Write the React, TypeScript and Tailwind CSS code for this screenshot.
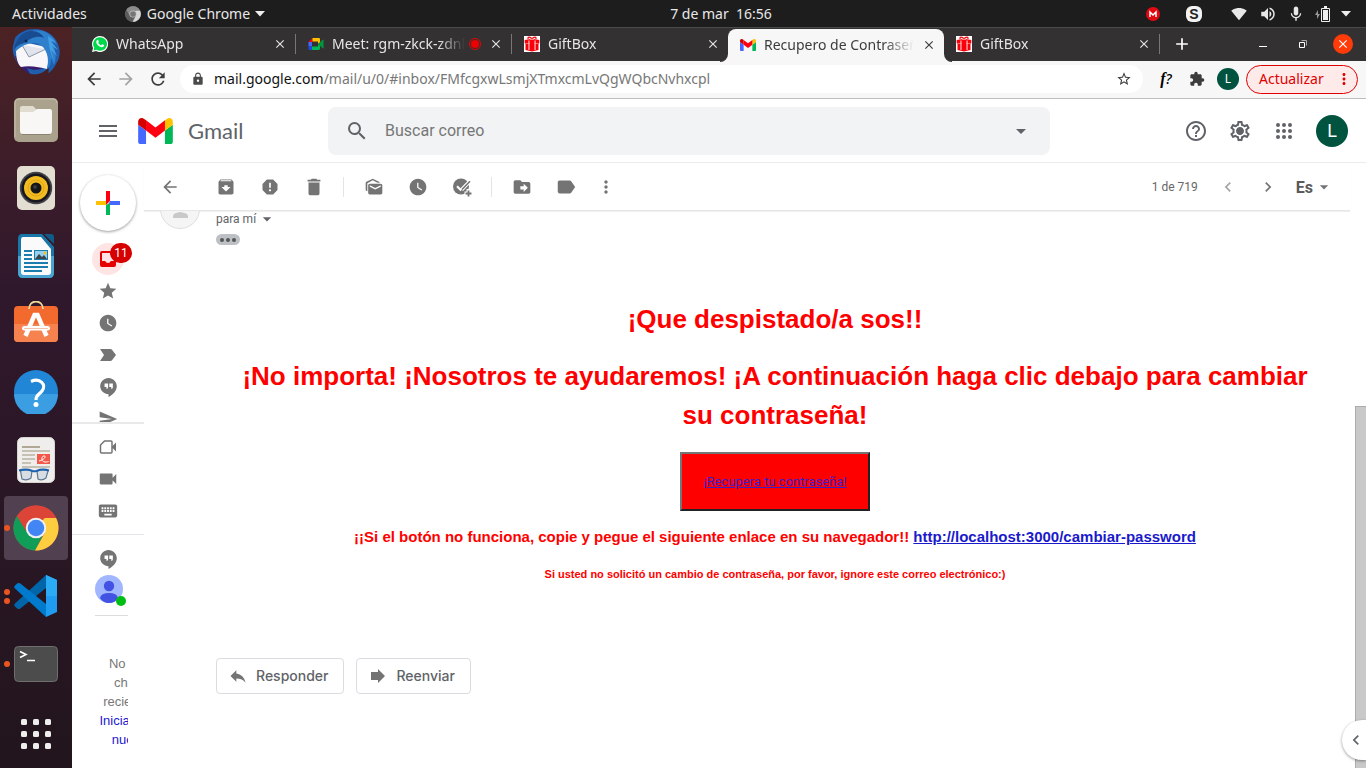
import type { ReactNode } from "react";
import {
  MdAdd,
  MdArchive,
  MdArrowBack,
  MdArrowDropDown,
  MdArrowForward,
  MdChevronLeft,
  MdChevronRight,
  MdClose,
  MdDelete,
  MdDriveFileMove,
  MdExtension,
  MdHelpOutline,
  MdKeyboard,
  MdLabel,
  MdLabelImportant,
  MdLock,
  MdMarkAsUnread,
  MdMenu,
  MdMic,
  MdMoreVert,
  MdRefresh,
  MdReply,
  MdReport,
  MdSearch,
  MdSend,
  MdSettings,
  MdSignalWifi4Bar,
  MdStar,
  MdStarBorder,
  MdVideocam,
  MdVolumeUp,
  MdWatchLater,
  MdOutlineSettings,
} from "react-icons/md";

/* ---------- drawings ---------- */

function GmailLogo({ className }: { className: string }) {
  return (
    <svg viewBox="52 42 88 66" className={className} aria-hidden="true">
      <path fill="#4568ff" d="M58 108h14V74L52 59v43c0 3.32 2.69 6 6 6" />
      <path fill="#00b857" d="M120 108h14c3.32 0 6-2.69 6-6V59l-20 15" />
      <path fill="#ffc200" d="M120 48v26l20-15v-8c0-7.42-8.47-11.65-14.4-7.2" />
      <path fill="#ff0012" d="M72 74V48l24 18 24-18v26L96 92" />
      <path fill="#d40000" d="M52 51v8l20 15V48l-5.6-4.2c-5.94-4.45-14.4-.22-14.4 7.2" />
    </svg>
  );
}

function WhatsAppIcon() {
  return (
    <svg viewBox="0 0 16 16" className="size-4 shrink-0" aria-hidden="true">
      <path fill="#fff" d="M8 0a8 8 0 0 0-7 11.9L0 16l4.2-1A8 8 0 1 0 8 0z" />
      <path fill="#00d94c" d="M8 1.2a6.8 6.8 0 0 0-5.8 10.4L1.6 14.4l2.9-.7A6.8 6.8 0 1 0 8 1.2z" />
      <path
        fill="#fff"
        d="M5.200 4.100c.4-.4.9-.3 1 .1l.6 1.300c.1.300 0 .5-.6 1.200.7 1.300 1.600 2.100 2.900 2.700l.8-1c.2-.2.4-.2.6-.1l1.400.7c.3.200.3.400.2.800-.3 1.100-1.600 1.700-2.700 1.400-2.600-.7-4.400-2.500-5-4.300-.3-1 .1-2.200.8-2.800z"
      />
    </svg>
  );
}

function MeetIcon() {
  return (
    <svg viewBox="0 0 16 14" className="h-3.5 w-4 shrink-0" aria-hidden="true">
      <path fill="#ff0012" d="M4.500 1 .5 5h4z" />
      <path fill="#4568ff" d="M.5 5H4v4.500H.5z" />
      <path fill="#2148e0" d="M.5 9.500H4V13H1.700C1 13 .5 12.500.5 11.800z" />
      <path fill="#00b857" d="M4 9.500h6V7l2 1.500v3.300c0 .7-.5 1.200-1.200 1.200H4z" />
      <path fill="#ffc200" d="M4.500 1h6.300c.7 0 1.200.5 1.200 1.200v3L10 7V4.500H4.500z" />
      <path fill="#00953d" d="M10 7l4.800-4.300c.3-.3.800-.1.800.4v7.800c0 .5-.5.7-.8.4z" />
    </svg>
  );
}

function GiftIcon() {
  return (
    <svg viewBox="0 0 16 16" className="size-4 shrink-0" aria-hidden="true">
      <path fill="#fff" d="M0 0h16v16H0z" />
      <path fill="#f9000b" d="M.7 4 8 2.700 15.300 4v3.300h-.8v6.700L8 15.600 1.500 14V7.300H.7z" />
      <path fill="none" stroke="#f9000b" strokeWidth="1.300" d="M8 3C6 .2 3.200.6 4.200 3M8 3c2-2.800 4.800-2.400 3.800 0" />
      <path fill="#ffb3b3" d="M4.300 4.400h1.300v9.500H4.300zM10.400 4.400h1.300v9.500h-1.300zM6 2.700h4v1H6z" />
      <path fill="#ffd0d0" d="M2 7h3.500v.6H2zM10.500 7H14v.6h-3.500z" />
    </svg>
  );
}

function ChromeIcon({ className, mono = false }: { className: string; mono?: boolean }) {
  const red = mono ? "#8b8b8b" : "#db4437";
  const green = mono ? "#5c5c5c" : "#0f9d58";
  const yellow = mono ? "#d6d6d6" : "#ffcd40";
  return (
    <svg viewBox="0 0 48 48" className={className} aria-hidden="true">
      <circle cx="24" cy="24" r="23.500" fill={red} />
      <path fill={green} d="M4.100 11.500A23.500 23.500 0 0 0 23 47.500L32.700 29 24 24l-8.700 5z" />
      <path fill={yellow} d="M24 13.500h21A23.500 23.500 0 0 1 23 47.500L33.100 29.200z" />
      <path fill={red} d="M4.100 11.500 14.900 29.200 24 24l9 -10.500h12A23.500 23.500 0 0 0 4.100 11.500z" />
      <circle cx="24" cy="24" r="10.700" fill={mono ? "#c4c4c4" : "#f1f1f1"} />
      <circle cx="24" cy="24" r="8.600" fill={mono ? "#777" : "#4285f4"} />
    </svg>
  );
}

function HangoutsIcon() {
  return (
    <svg viewBox="0 0 24 24" className="size-[19px]" fill="currentColor" aria-hidden="true">
      <path d="M12 0C6.200 0 1.500 4.700 1.500 10.500c0 5.500 5 10 10.500 10V24c6.350-3.100 10.500-8.200 10.500-13.500C22.500 4.700 17.800 0 12 0zm-.5 11.500c0 1.400-.9 2.500-2 2.500v-2.500H7V7h4.500zm6 0c0 1.400-.9 2.500-2 2.500v-2.500H13V7h4.500z" />
    </svg>
  );
}

function AddTaskIcon() {
  return (
    <svg viewBox="0 0 20 20" className="size-5" aria-hidden="true">
      <circle cx="9" cy="9.500" r="8" fill="currentColor" />
      <path d="m5 9.300 3.500 3.500L18 3" fill="none" stroke="#fff" strokeWidth="2" />
      <path d="m10.500 13.500 8-8.500" stroke="#fff" strokeWidth="1.500" />
      <path d="m10 12.600 8-8.300" stroke="currentColor" strokeWidth="1.500" />
      <path d="M16.500 12v8M12.500 16.500H20" stroke="#fff" strokeWidth="4" />
      <path d="M16.500 13.500v6M13.500 16.500h6" stroke="currentColor" strokeWidth="1.800" />
    </svg>
  );
}

function NewMeetingIcon() {
  return (
    <svg viewBox="0 0 18 16" className="h-4 w-[18px]" aria-hidden="true">
      <path d="M5.500 2H12c.6 0 1 .4 1 1v10c0 .6-.4 1-1 1H2.500c-.6 0-1-.4-1-1V6z" fill="none" stroke="currentColor" strokeWidth="1.500" />
      <path d="M13 7.500 17 3.500v9l-4-4z" fill="currentColor" />
    </svg>
  );
}

function InboxIcon() {
  return (
    <svg viewBox="0 0 18 18" className="size-[18px]" aria-hidden="true">
      <path fill="#e60000" fillRule="evenodd" d="M3 1h12a2 2 0 0 1 2 2v12a2 2 0 0 1-2 2H3a2 2 0 0 1-2-2V3a2 2 0 0 1 2-2zm0 2v8h3.200a3 3 0 0 0 5.600 0H15V3z" />
    </svg>
  );
}

function ThunderbirdIcon() {
  return (
    <svg viewBox="0 0 48 48" className="size-12" aria-hidden="true">
      <path fill="#1f5fae" d="M3 10C9 1 24-2 35 4c13 7 16 22 9 32-2 4-5 8-8 9 1-3 1-4 0-5-5 6-12 7-17 6C8 42-1 28 1 18z" />
      <path fill="#3a1d6c" d="M3 28c2 9 8 15 15 18l-3-6c7 3 15 2 20-2l-4-6z" />
      <path fill="#f8f8fb" d="M4 21c0 8 1 14 5 18 8-2 19 0 26 2 2-7 2-15-1-22l-18-4z" />
      <path fill="#e1e4ec" d="m10 17 23 4-16 8z" />
      <path fill="none" stroke="#8d97a8" strokeWidth="1" d="m10 17 7 12 17-8" />
      <path fill="#2e7fcc" d="M20 3c11-3 22 4 25 14l-6-4c5 8 6 16 3 24l-3-7c0 6-1 9-4 11 2-9 1-16-4-22-4-4-9-5-15-3-5 1-9 4-13 8 1-10 8-19 17-21z" />
      <path fill="#194b91" d="M14 4c8-3 16 1 18 6-6-3-14 0-20 5-4 1-7 3-10 6C4 12 8 7 14 4z" />
      <path fill="#45a0e6" d="m36 8 8 6-5-1 7 9-6-4 5 10-6-6 3 10c-3-4-5-13-6-24z" />
      <circle cx="14" cy="13" r="1.500" fill="#0d2850" />
    </svg>
  );
}

function FilesIcon() {
  return (
    <svg viewBox="0 0 44 44" className="size-11" aria-hidden="true">
      <rect width="44" height="44" rx="5" fill="#aaa28c" />
      <path d="M1 39V5q0-4 4-4h34q4 0 4 4" fill="none" stroke="#c4bda9" />
      <path d="M6 10q0-2 2-2h11l3 3-1 6H6z" fill="#e0dccf" />
      <path d="M6 14h13l4-3h13q2 0 2 3v19q0 3-3 3H9q-3 0-3-3z" fill="#f8f7f5" />
      <path d="M8 36.500h28" stroke="#8a836f" strokeWidth="1" />
    </svg>
  );
}

function RhythmboxIcon() {
  return (
    <svg viewBox="0 0 38 44" className="h-11 w-[38px]" aria-hidden="true">
      <rect width="38" height="44" rx="5" fill="#e2ded2" />
      <circle cx="19" cy="22" r="16.200" fill="#44434a" />
      <circle cx="19" cy="22" r="14.500" fill="#17181d" />
      <circle cx="19" cy="22" r="12" fill="#f1bb21" />
      <circle cx="19" cy="22" r="8" fill="none" stroke="#e0a711" />
      <circle cx="19" cy="22" r="5.500" fill="#15161a" />
      <circle cx="18" cy="21" r="2" fill="#393a40" />
    </svg>
  );
}

function WriterIcon() {
  return (
    <svg viewBox="0 0 38 46" className="h-[46px] w-[38px]" aria-hidden="true">
      <path d="M5 1h20l12 13v26q0 5-5 5H6q-5 0-5-5V6q0-5 4-5z" fill="#1877a8" />
      <path d="M1 23h36v17q0 5-5 5H6q-5 0-5-5z" fill="#49a4cf" />
      <path d="M6 4h18l10 12v23q0 3-3 3H7q-3 0-3-3V7q0-3 2-3z" fill="#fafafa" />
      <path d="M27 1h7q3 0 3 3v7z" fill="#0e5c87" />
      <path d="M7 18h8M7 22h8M7 26h8M7 30h24M7 34h24M7 38h18" stroke="#1b7cae" strokeWidth="2" />
      <path d="M17 17h14v10H17z" fill="#1b7cae" />
      <path d="M18 18h12v8H18z" fill="#97d0ee" />
      <path d="m18 26 4-5 3 3 2-2 3 4z" fill="#3b4449" />
      <circle cx="28" cy="20" r="1.500" fill="#f6c31c" />
    </svg>
  );
}

function SoftwareIcon() {
  return (
    <svg viewBox="0 3 46 46" className="size-[46px]" aria-hidden="true">
      <rect x="1" y="8" width="44" height="36" rx="4" fill="#f26a2e" />
      <path d="M1 26h44v14q0 4-4 4H5q-4 0-4-4z" fill="#f5824f" />
      <path d="M16 11c0-10 14-10 14 0" fill="none" stroke="#f0d49a" strokeWidth="1.800" />
      <path d="M12.500 38 21.500 17h3l9 21" fill="none" stroke="#fff" strokeWidth="4.500" />
      <rect x="9" y="28" width="28" height="4.500" rx="2.200" fill="#fff" />
      <path d="M11 30.500h24" stroke="#f3c3ad" strokeWidth="1" />
    </svg>
  );
}

function HelpIcon() {
  return (
    <svg viewBox="0 0 44 44" className="size-11" aria-hidden="true">
      <circle cx="22" cy="22" r="22" fill="#2186d6" />
      <path d="M0 24h44a22 22 0 0 1-44 0z" fill="#3c9ee2" />
      <path d="M17 11.500c9-4 16 3 11 9.500-3 4-6 4-6 9" fill="none" stroke="#fff" strokeWidth="3.200" />
      <circle cx="22" cy="34.500" r="2.500" fill="#fff" />
    </svg>
  );
}

function EvinceIcon() {
  return (
    <svg viewBox="0 0 38 46" className="h-[46px] w-[38px]" aria-hidden="true">
      <rect x=".5" y=".5" width="37" height="45" rx="5" fill="#efeeec" stroke="#d8d5d0" />
      <path d="M5 10h18" stroke="#b1a795" strokeWidth="2" />
      <path d="M5 14h28M5 18h13M5 22h13M5 26h9M5 30h28" stroke="#c7c1b4" strokeWidth="2" />
      <path d="M20 17h13v10H20z" fill="#f4564a" />
      <path d="M22 24c5-1 8-5 5-5s-3 6 1 6 4-1 4-1" fill="none" stroke="#fff" strokeWidth="1" />
      <path d="M3.500 34q6-2 11.500 0l-1 7q-4 3-9 1zM20 34q6-2 11 0l-2 7q-4 3-8 1z" fill="#d7dde3" stroke="#5e7897" strokeWidth="1.200" />
      <path d="M2 33.500q7-2 13.500.5 2 .5 4 0 6-2.500 12.500-.5" fill="none" stroke="#1c61b0" strokeWidth="2" />
    </svg>
  );
}

function VsCodeIcon() {
  return (
    <svg viewBox="0 0 44 44" className="size-11" aria-hidden="true">
      <path d="M1 29.500q-1.500 1.500 0 3l2.500 2.200q1.200.8 2.500 0L32 14V1z" fill="#0065a9" />
      <path d="M1 14.500q-1.500-1.500 0-3L3.500 9.300q1.200-.8 2.500 0L32 30v13z" fill="#007acc" />
      <path d="M32 1 43 6v32l-11 5z" fill="#1f9cf0" />
      <path d="M32 1 43 6v16H32z" fill="#2aabf3" />
    </svg>
  );
}

function TerminalIcon() {
  return (
    <svg viewBox="0 0 44 36" className="h-9 w-11" aria-hidden="true">
      <rect x=".5" y=".5" width="43" height="35" rx="4" fill="#4c4c4c" stroke="#6e6e6e" />
      <path d="m6 5.500 6 3-6 3M13 14.500h8" fill="none" stroke="#fff" strokeWidth="1.600" />
    </svg>
  );
}

function GridIcon() {
  return (
    <svg viewBox="0 0 30 30" className="size-[30px]" fill="#eeeeec" aria-hidden="true">
      {[0, 12, 24].map((y) =>
        [0, 12, 24].map((x) => <rect key={`${x}-${y}`} x={x} y={y} width="6" height="6" rx="1.500" />),
      )}
    </svg>
  );
}

function AppsIcon() {
  return (
    <svg viewBox="0 0 24 24" className="size-6" fill="currentColor" aria-hidden="true">
      {[6, 12, 18].map((y) => [6, 12, 18].map((x) => <circle key={`${x}-${y}`} cx={x} cy={y} r="2" />))}
    </svg>
  );
}

function GearIcon() {
  return (
    <span className="relative block size-6">
      <MdOutlineSettings className="size-6" />
      <span className="absolute inset-[9px] rounded-full bg-current" />
    </span>
  );
}

/* ---------- desktop ---------- */

function TopBar() {
  return (
    <header className="grid h-[27px] shrink-0 grid-cols-3 items-center bg-[#1d1d1d] text-sm leading-none text-[#e8e8e8]">
      <div className="flex items-center pl-3">
        <button type="button">Actividades</button>
        <button type="button" className="ml-[38px] flex items-center">
          <ChromeIcon className="mr-1.5 size-4" mono />
          Google Chrome
          <svg viewBox="0 0 10 6" className="ml-[5px] h-1.5 w-2.5" aria-hidden="true">
            <path d="M0 0h10L5 5.500z" fill="#eee" />
          </svg>
        </button>
      </div>
      <time className="justify-self-center pl-[76px]">7 de mar&nbsp; 16:56</time>
      <div className="flex items-center justify-end pr-[15px]">
        <svg viewBox="0 0 14 14" className="mr-[26px] size-3.5" aria-hidden="true">
          <circle cx="7" cy="7" r="7" fill="#e10a12" />
          <path d="M4 10V5l3 3 3-3v5" fill="none" stroke="#fff" strokeWidth="1.500" />
        </svg>
        <span className="mr-[29px] flex size-4 items-center justify-center rounded-[6px] bg-[#f2f2f2] font-['Liberation_Sans',sans-serif] text-sm font-bold leading-none text-[#222]">
          S
        </span>
        <MdSignalWifi4Bar className="mr-3 size-4" />
        <MdVolumeUp className="mr-2.5 size-[18px]" />
        <MdMic className="mr-2.5 size-[18px]" />
        <svg viewBox="0 0 15 16" className="mr-[11px] h-4 w-[15px]" aria-hidden="true">
          <path d="M3 4 0 9h2v4l3-5H3z" fill="#999" />
          <path d="M6.500 2.500h8v13h-8z" fill="none" stroke="#eee" />
          <path d="M8 4h5v10H8zM9 0h3v2H9z" fill="#eee" />
        </svg>
        <svg viewBox="0 0 10 6" className="h-1.5 w-2.5" aria-hidden="true">
          <path d="M0 0h10L5 5.500z" fill="#eee" />
        </svg>
      </div>
    </header>
  );
}

const dockItems: { name: string; icon: ReactNode; windows: number; active?: boolean }[] = [
  { name: "Thunderbird", icon: <ThunderbirdIcon />, windows: 0 },
  { name: "Archivos", icon: <FilesIcon />, windows: 0 },
  { name: "Rhythmbox", icon: <RhythmboxIcon />, windows: 0 },
  { name: "LibreOffice Writer", icon: <WriterIcon />, windows: 0 },
  { name: "Software", icon: <SoftwareIcon />, windows: 0 },
  { name: "Ayuda", icon: <HelpIcon />, windows: 0 },
  { name: "Visor de documentos", icon: <EvinceIcon />, windows: 0 },
  { name: "Google Chrome", icon: <ChromeIcon className="size-[46px]" />, windows: 1, active: true },
  { name: "Visual Studio Code", icon: <VsCodeIcon />, windows: 2 },
  { name: "Terminal", icon: <TerminalIcon />, windows: 1 },
];

function Dock() {
  return (
    <nav
      aria-label="Dock"
      className="flex w-[72px] shrink-0 flex-col overflow-hidden bg-linear-to-b from-[#4c2224] via-[#30182c] via-35% to-[#22151d] px-1"
    >
      <ul className="-mt-[7px] flex shrink-0 flex-col gap-1">
        {dockItems.map((item) => (
          <li key={item.name} className="relative">
            <button
              type="button"
              aria-label={item.name}
              className={`flex h-16 w-full items-center justify-center rounded ${item.active ? "bg-[#51404f]" : ""}`}
            >
              {item.icon}
            </button>
            <span className="absolute inset-y-0 left-0 flex flex-col justify-center gap-[3px]">
              {Array.from({ length: item.windows }, (_, i) => (
                <span key={i} className="size-1.5 rounded-full bg-[#e95420]" />
              ))}
            </span>
          </li>
        ))}
      </ul>
      <button type="button" aria-label="Mostrar aplicaciones" className="mt-auto flex h-[68px] shrink-0 items-center justify-center">
        <GridIcon />
      </button>
    </nav>
  );
}

/* ---------- browser ---------- */

function Tab({ icon, title, active = false, divider = false, recording = false }: { icon: ReactNode; title: string; active?: boolean; divider?: boolean; recording?: boolean }) {
  return (
    <div
      className={`relative flex h-full w-[216px] min-w-0 items-center pl-3 ${active ? "rounded-t-lg bg-[#f7f7f7] text-[#3c3c3c]" : "text-[#e6e6e6]"}`}
    >
      {active && (
        <>
          <span className="absolute -left-2 bottom-0 size-2 bg-[#f7f7f7]">
            <span className="block size-2 rounded-br-lg bg-[#333132]" />
          </span>
          <span className="absolute -right-2 bottom-0 size-2 bg-[#f7f7f7]">
            <span className="block size-2 rounded-bl-lg bg-[#333132]" />
          </span>
        </>
      )}
      {icon}
      <span className="ml-2 min-w-0 flex-1 overflow-hidden whitespace-nowrap pb-px text-sm leading-5 mask-r-from-80%">
        {title}
      </span>
      {recording && (
        <span className="ml-1 flex size-3 shrink-0 items-center justify-center rounded-full border border-[#e00]">
          <span className="size-2 rounded-full bg-[#e00]" />
        </span>
      )}
      <button type="button" aria-label={`Cerrar ${title}`} className="mx-2 shrink-0">
        <MdClose className="size-3.5" />
      </button>
      {divider && <span className="h-5 w-px shrink-0 bg-[#777]" />}
    </div>
  );
}

function TabStrip() {
  return (
    <div className="flex h-[34px] shrink-0 items-center border-t border-[#4a4a4a] bg-[#333132] pb-px pl-2">
      <Tab icon={<WhatsAppIcon />} title="WhatsApp" divider />
      <Tab icon={<MeetIcon />} title="Meet: rgm-zkck-zdnk" divider recording />
      <Tab icon={<GiftIcon />} title="GiftBox" />
      <div className="-mb-px h-[34px] w-[216px] min-w-0 pt-px">
        <Tab icon={<GmailLogo className="h-3 w-4 shrink-0" />} title="Recupero de Contraseña" active />
      </div>
      <Tab icon={<GiftIcon />} title="GiftBox" divider />
      <button type="button" aria-label="Nueva pestaña" className="ml-3 text-white">
        <MdAdd className="size-5" />
      </button>
      <div className="ml-auto flex items-center pr-[13px] text-white">
        <button type="button" aria-label="Minimizar" className="mr-8 flex h-4 w-2 items-center pt-1">
          <span className="h-px w-full bg-white" />
        </button>
        <button type="button" aria-label="Restaurar" className="mr-[26px]">
          <svg viewBox="0 0 8 8" className="size-2" fill="none" aria-hidden="true">
            <path d="M.5 2.500h5v5h-5z" stroke="#fff" />
            <path d="M2.500.5h5v5" stroke="#aaa" />
          </svg>
        </button>
        <button type="button" aria-label="Cerrar" className="flex size-5 items-center justify-center rounded-full bg-[#ff3b09]">
          <MdClose className="size-3.5" />
        </button>
      </div>
    </div>
  );
}

function AddressBar() {
  return (
    <div className="flex h-[38px] shrink-0 items-center border-b border-[#bdbdbd] bg-[#f7f7f7] pb-px pl-3 pr-2 text-[#3c3c3c]">
      <div className="mr-3 flex gap-3">
        <button type="button" aria-label="Atrás"><MdArrowBack className="size-5" /></button>
        <button type="button" aria-label="Adelante" className="text-[#a3a3a3]"><MdArrowForward className="size-5" /></button>
        <button type="button" aria-label="Recargar"><MdRefresh className="size-5" /></button>
      </div>
      <div className="flex h-7 min-w-0 flex-1 items-center rounded-full bg-white pl-[11px] pr-[11px]">
        <MdLock className="size-3.5 shrink-0 text-[#4a4a4a]" />
        <span className="ml-[9px] min-w-0 flex-1 truncate text-sm leading-5 text-[#777]">
          <span className="text-[#111]">mail.google.com</span>/mail/u/0/#inbox/FMfcgxwLsmjXTmxcmLvQgWQbcNvhxcpl
        </span>
        <button type="button" aria-label="Añadir a marcadores"><MdStarBorder className="size-4" /></button>
      </div>
      <button type="button" aria-label="Identificador de fuentes" className="ml-3.5 w-[18px] whitespace-nowrap font-['Liberation_Serif',serif] text-base font-bold italic leading-none text-black">
        f<span className="font-['Noto_Sans',sans-serif] text-sm font-medium leading-none">?</span>
      </button>
      <button type="button" aria-label="Extensiones" className="ml-3.5"><MdExtension className="size-4" /></button>
      <button type="button" aria-label="Perfil" className="ml-3 mr-[7px] size-[22px] rounded-full bg-[#00533f] text-xs leading-none text-white">L</button>
      <button type="button" className="flex h-[29px] w-28 items-center justify-between rounded-full border border-[#e00000] bg-[#ffeaea] pl-3 pr-1 text-sm leading-none text-[#e00000]">
        Actualizar
        <MdMoreVert className="size-[18px]" />
      </button>
    </div>
  );
}

/* ---------- mail ---------- */

function MailHeader() {
  return (
    <header className="flex h-16 shrink-0 items-center border-b border-[#ececec] font-[Roboto,sans-serif] text-[#5f6368]">
      <button type="button" aria-label="Menú principal" className="ml-6"><MdMenu className="size-6" /></button>
      <a href="#inbox" className="ml-[18px] flex w-[190px] items-center">
        <GmailLogo className="h-[26px] w-[35px] shrink-0" />
        <span className="ml-[15px] font-[Lato,sans-serif] text-[22px] leading-6">Gmail</span>
      </a>
      <form role="search" className="flex h-12 w-[722px] min-w-0 items-center rounded-lg bg-[#f1f3f4]">
        <button type="button" aria-label="Buscar" className="ml-[17px]"><MdSearch className="size-6" /></button>
        <input
          aria-label="Buscar correo"
          placeholder="Buscar correo"
          className="ml-4 min-w-0 flex-1 bg-transparent text-base outline-none placeholder:text-[#777]"
        />
        <button type="button" aria-label="Opciones de búsqueda" className="mr-[17px]"><MdArrowDropDown className="size-6" /></button>
      </form>
      <div className="ml-auto flex items-center gap-5 pr-[18px]">
        <button type="button" aria-label="Asistencia"><MdHelpOutline className="size-6" /></button>
        <button type="button" aria-label="Configuración"><GearIcon /></button>
        <button type="button" aria-label="Aplicaciones de Google"><AppsIcon /></button>
        <button type="button" aria-label="Cuenta" className="size-8 rounded-full bg-[#00533f] text-lg leading-none text-white">L</button>
      </div>
    </header>
  );
}

function SideButton({ label, children }: { label: string; children: ReactNode }) {
  return (
    <button type="button" aria-label={label} className="flex h-8 w-full shrink-0 items-center justify-center">
      {children}
    </button>
  );
}

function Sidebar() {
  return (
    <aside className="flex w-[72px] shrink-0 flex-col overflow-hidden text-[#747474]">
      <div className="flex shrink-0 justify-center pb-3 pt-3">
        <button type="button" aria-label="Redactar" className="flex size-14 items-center justify-center rounded-full bg-white shadow-[0_1px_3px_rgba(0,0,0,0.4)]">
          <svg viewBox="0 0 24 24" className="size-6" aria-hidden="true">
            <path d="M10 0h4v10l-4 4z" fill="#ff0012" />
            <path d="M0 10h10v4H0z" fill="#ffc200" />
            <path d="M14 10h10v4H12z" fill="#4568ff" />
            <path d="M10 14l4-2v12h-4z" fill="#00b857" />
          </svg>
        </button>
      </div>
      <div className="flex h-[181px] shrink-0 flex-col overflow-hidden border-b-2 border-[#e9e9e9]">
        <div className="relative flex h-8 shrink-0 items-center pl-5">
          <button type="button" aria-label="Recibidos" className="flex size-8 items-center justify-center rounded-full bg-[#ffe4e4]">
            <InboxIcon />
          </button>
          <span className="absolute left-[38px] top-0 flex h-5 w-[22px] items-center justify-center rounded-full bg-[#d60000] font-[Roboto,sans-serif] text-xs leading-none text-white">
            11
          </span>
        </div>
        <SideButton label="Destacados"><MdStar className="size-5" /></SideButton>
        <SideButton label="Pospuestos"><MdWatchLater className="size-5" /></SideButton>
        <SideButton label="Importantes">
          <svg viewBox="0 0 18 14" className="h-3.5 w-[18px]" fill="currentColor" aria-hidden="true">
            <path d="M1 1h10.500q1 0 1.500.8L17 7l-4 5.200q-.5.800-1.500.800H1l4-6z" />
          </svg>
        </SideButton>
        <SideButton label="Chats"><HangoutsIcon /></SideButton>
        <SideButton label="Enviados"><MdSend className="size-5" /></SideButton>
      </div>
      <div className="-mt-px flex shrink-0 flex-col border-b border-[#e4e4e9] pb-[7px] pt-2">
        <SideButton label="Nueva reunión"><NewMeetingIcon /></SideButton>
        <SideButton label="Unirse a una reunión"><MdVideocam className="size-[22px]" /></SideButton>
        <SideButton label="Códigos"><MdKeyboard className="size-[22px]" /></SideButton>
      </div>
      <div className="flex shrink-0 flex-col pt-2">
        <SideButton label="Hangouts"><HangoutsIcon /></SideButton>
        <div className="ml-[23px] mr-4 overflow-hidden">
          <button type="button" aria-label="Mi estado" className="relative block border-b border-[#dcdcdc] pb-[9px]">
            <svg viewBox="0 0 33 31" className="h-[31px] w-[33px]" aria-hidden="true">
              <circle cx="14" cy="14" r="14" fill="#a0b7ff" />
              <circle cx="14" cy="11" r="5.200" fill="#4252e3" />
              <path d="M5 23q1-5 9-5t9 5q-3 5-9 5t-9-5z" fill="#4252e3" />
              <circle cx="26" cy="26" r="5" fill="#00bd14" />
            </svg>
          </button>
          <p className="mt-[38px] w-[69px] text-center font-['Liberation_Sans',sans-serif] text-[13px] leading-[19px] text-[#777]">
            No hay chats recientes
            <a href="#chat" className="block text-[#2418d0]">Iniciar uno nuevo</a>
          </p>
        </div>
      </div>
    </aside>
  );
}

function ToolButton({ label, children }: { label: string; children: ReactNode }) {
  return (
    <button type="button" aria-label={label} className="flex h-11 w-11 shrink-0 items-center justify-center">
      {children}
    </button>
  );
}

function MailToolbar() {
  return (
    <div className="mr-4 flex h-12 shrink-0 items-center border-b border-[#e6e6e6] pl-1 font-[Roboto,sans-serif] text-[#747474] shadow-[0_1px_1px_rgba(0,0,0,0.06)]">
      <ToolButton label="Volver"><MdArrowBack className="size-5" /></ToolButton>
      <div className="ml-3 flex">
        <ToolButton label="Archivar"><MdArchive className="size-5" /></ToolButton>
        <ToolButton label="Marcar como spam"><MdReport className="size-5" /></ToolButton>
        <ToolButton label="Eliminar"><MdDelete className="size-[22px]" /></ToolButton>
      </div>
      <span className="ml-[7px] mr-2 h-5 w-px bg-[#e4e4e4]" />
      <ToolButton label="Marcar como no leído"><MdMarkAsUnread className="size-5" /></ToolButton>
      <ToolButton label="Posponer"><MdWatchLater className="size-5" /></ToolButton>
      <ToolButton label="Añadir a Tareas"><AddTaskIcon /></ToolButton>
      <span className="ml-[7px] mr-2 h-5 w-px bg-[#e4e4e4]" />
      <ToolButton label="Mover a"><MdDriveFileMove className="size-5" /></ToolButton>
      <ToolButton label="Etiquetas"><MdLabel className="size-[22px]" /></ToolButton>
      <button type="button" aria-label="Más" className="flex size-9 items-center justify-center"><MdMoreVert className="size-5" /></button>
      <div className="ml-auto flex items-center">
        <span className="mr-5 text-xs leading-none text-[#666]">1 de 719</span>
        <button type="button" aria-label="Más recientes" className="mr-5 text-[#a5a5a5]"><MdChevronLeft className="size-5" /></button>
        <button type="button" aria-label="Más antiguos" className="mr-[18px]"><MdChevronRight className="size-5" /></button>
        <button type="button" aria-label="Herramienta de introducción de texto" className="mr-4 flex items-center">
          <span className="pt-0.5 text-base font-bold leading-none text-[#5a5a5a]">Es</span>
          <MdArrowDropDown className="ml-px size-5" />
        </button>
      </div>
    </div>
  );
}

function Message() {
  return (
    <article className="min-w-0 flex-1 overflow-hidden pl-4 pr-[21px]">
      <div className="flex h-[37px]">
        <div className="mr-4 h-[18px] w-10 shrink-0 overflow-hidden">
          <svg viewBox="0 22 40 18" className="h-[18px] w-10" aria-hidden="true">
            <circle cx="20" cy="20" r="19.500" fill="#f5f5f5" stroke="#dedede" />
            <path d="M13 29v-2q0-3 7-4 8 1 8 4v2z" fill="#c9c9c9" />
          </svg>
        </div>
        <div>
          <button type="button" className="flex h-4 items-center font-[Roboto,sans-serif] text-xs leading-4 text-[#5f6368]">
            para mí
            <MdArrowDropDown className="ml-px size-5" />
          </button>
          <button type="button" aria-label="Mostrar contenido acortado" className="mt-[7px] flex h-[11px] w-6 items-center justify-center gap-0.5 rounded-full bg-[#bdc1c6]">
            <span className="size-1 rounded-full bg-[#555]" />
            <span className="size-1 rounded-full bg-[#555]" />
            <span className="size-1 rounded-full bg-[#555]" />
          </button>
        </div>
      </div>

      <div className="ml-14 mt-[52px] flex flex-col items-center text-center font-['Liberation_Sans',sans-serif] font-bold text-[#ff0000]">
        <h1 className="text-[26px] leading-[39px]">¡Que despistado/a sos!!</h1>
        <h1 className="mt-[18px] px-4 text-[26px] leading-[39px]">
          ¡No importa! ¡Nosotros te ayudaremos! ¡A continuación haga clic debajo para cambiar su contraseña!
        </h1>
        <a
          href="http://localhost:3000/cambiar-password"
          className="mt-[17px] border-2 border-b-[#222] border-l-[#767676] border-r-[#222] border-t-[#767676] bg-[#ff0000] px-[21px] py-[18px] font-[Roboto,sans-serif] text-[13px] font-normal leading-[19px] text-[#3a1fc8] underline"
        >
          ¡Recupera tu contraseña!
        </a>
        <h3 className="mt-3.5 text-[15px] leading-[23px]">
          ¡¡Si el botón no funciona, copie y pegue el siguiente enlace en su navegador!!{" "}
          <a href="http://localhost:3000/cambiar-password" className="text-[#1a1acc] underline">
            http://localhost:3000/cambiar-password
          </a>
        </h3>
        <h6 className="mt-[18px] text-[11px] leading-4">
          Si usted no solicitó un cambio de contraseña, por favor, ignore este correo electrónico:)
        </h6>
      </div>

      <div className="ml-14 mt-[76px] flex gap-3 font-[Inter,sans-serif] text-sm font-medium text-[#5f6368]">
        <button type="button" className="flex h-9 items-center gap-2 rounded border border-[#dadce0] pl-[11px] pr-[15px]">
          <MdReply className="size-5 text-[#747474]" />
          <span>Responder</span>
        </button>
        <button type="button" className="flex h-9 items-center gap-2 rounded border border-[#dadce0] pl-[11px] pr-[15px]">
          <svg viewBox="0 0 20 20" className="size-5" fill="#747474" aria-hidden="true">
            <path d="M3 6h7V3l7 7-7 7v-3H3z" />
          </svg>
          <span>Reenviar</span>
        </button>
      </div>
    </article>
  );
}

export default function App() {
  return (
    <div className="flex h-screen flex-col overflow-hidden bg-white font-['Noto_Sans',sans-serif]">
      <TopBar />
      <div className="flex min-h-0 flex-1">
        <Dock />
        <div className="flex min-w-0 flex-1 flex-col">
          <TabStrip />
          <AddressBar />
          <MailHeader />
          <div className="relative flex min-h-0 flex-1">
            <Sidebar />
            <main className="flex min-w-0 flex-1 flex-col">
              <MailToolbar />
              <div className="flex min-h-0 flex-1">
                <Message />
                <div className="flex w-[11px] shrink-0 flex-col justify-end">
                  <div className="h-[65%] border-l border-t border-[#acacac] bg-[#c9c9c9]" />
                </div>
              </div>
            </main>
            <button
              type="button"
              aria-label="Mostrar panel lateral"
              className="absolute bottom-2 right-0 flex h-10 w-6 items-center rounded-l-full bg-white pl-1 text-[#5f6368] shadow-[0_1px_3px_rgba(0,0,0,0.4)]"
            >
              <MdChevronLeft className="size-5" />
            </button>
          </div>
        </div>
      </div>
    </div>
  );
}
